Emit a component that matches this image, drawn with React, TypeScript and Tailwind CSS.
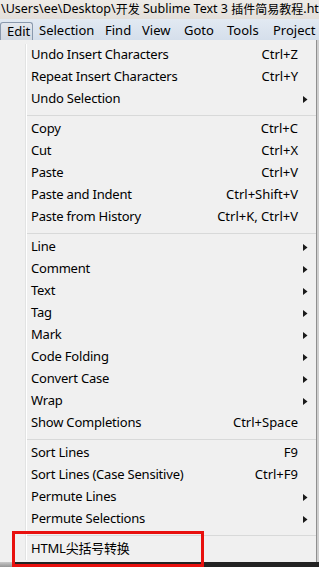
const FONT = "font-['Noto_Sans','Noto_Sans_CJK_SC',sans-serif]";

type Item = { label: string; shortcut?: string; sub?: boolean };

const groups: Item[][] = [
  [
    { label: "Undo Insert Characters", shortcut: "Ctrl+Z" },
    { label: "Repeat Insert Characters", shortcut: "Ctrl+Y" },
    { label: "Undo Selection", sub: true },
  ],
  [
    { label: "Copy", shortcut: "Ctrl+C" },
    { label: "Cut", shortcut: "Ctrl+X" },
    { label: "Paste", shortcut: "Ctrl+V" },
    { label: "Paste and Indent", shortcut: "Ctrl+Shift+V" },
    { label: "Paste from History", shortcut: "Ctrl+K, Ctrl+V" },
  ],
  [
    { label: "Line", sub: true },
    { label: "Comment", sub: true },
    { label: "Text", sub: true },
    { label: "Tag", sub: true },
    { label: "Mark", sub: true },
    { label: "Code Folding", sub: true },
    { label: "Convert Case", sub: true },
    { label: "Wrap", sub: true },
    { label: "Show Completions", shortcut: "Ctrl+Space" },
  ],
  [
    { label: "Sort Lines", shortcut: "F9" },
    { label: "Sort Lines (Case Sensitive)", shortcut: "Ctrl+F9" },
    { label: "Permute Lines", sub: true },
    { label: "Permute Selections", sub: true },
  ],
  [{ label: "HTML尖括号转换" }],
];

const menus = [
  { name: "Edit", w: "w-[33px]" },
  { name: "Selection", w: "w-[66px]" },
  { name: "Find", w: "w-[37px]" },
  { name: "View", w: "w-[42px]" },
  { name: "Goto", w: "w-[43px]" },
  { name: "Tools", w: "w-[46px]" },
  { name: "Project", w: "w-[52px]" },
];

function Arrow() {
  return (
    <svg width="5" height="7" viewBox="0 0 5 7" className="ml-[5px]">
      <path d="M0 0 L4.5 3.5 L0 7 Z" fill="#1a1a1a" />
    </svg>
  );
}

function Row({ item }: { item: Item }) {
  return (
    <div className="flex h-[22px] items-center pl-[4px] text-[13px] text-black">
      <span className="flex-1 whitespace-nowrap tracking-[-0.2px]">{item.label}</span>
      {item.shortcut && <span className="whitespace-nowrap">{item.shortcut}</span>}
      <span className="flex w-[18px] items-center">{item.sub && <Arrow />}</span>
    </div>
  );
}

export default function App() {
  return (
    <div className={`relative h-[567px] w-[319px] overflow-hidden bg-[#232323] ${FONT}`}>
      <div className="flex h-[19px] items-center overflow-hidden whitespace-nowrap bg-gradient-to-b from-[#eeebe7] to-[#e3dfda] pl-[1px] text-[12.5px] text-black">
        <span>\Users\ee\Desktop\</span>
        <span className="text-[12px]">开发</span>
        <span>&nbsp;Sublime Text 3&nbsp;</span>
        <span className="text-[12px]">插件简易教程</span>
        <span>.htm</span>
      </div>
      <div className="flex h-[21px] items-end bg-gradient-to-b from-[#e2e9f2] to-[#d5dfeb] text-[13px] text-black">
        {menus.map((m, i) => (
          <div
            key={m.name}
            className={`${m.w} flex h-[18px] items-center pl-[6px] ${
              i === 0 ? "rounded-t-[3px] border border-b-0 border-[#8a99ad] bg-gradient-to-b from-[#e4e8ee] to-[#d2d9e2] pl-[4px]" : ""
            }`}
          >
            {m.name}
          </div>
        ))}
      </div>
      <div className="flex">
        <div className="flex w-[317px] border-r border-[#8f8f8f] bg-[#f0f0f0] pb-[2px] pt-[4px]">
          <div className="w-[26px] border-r border-[#e2e3e3]" />
          <div className="flex-1 border-l border-white">
            {groups.map((g, gi) => (
              <div key={gi}>
                {gi > 0 && (
                  <div className="pb-[2px] pt-[5px]">
                    <div className="h-px bg-[#d8d9d9]" />
                  </div>
                )}
                {g.map((it) => (
                  <Row key={it.label} item={it} />
                ))}
              </div>
            ))}
          </div>
        </div>
        <div className="flex-1 bg-[#cfcfcf]" />
      </div>
      <div className="h-[6px] w-[12px] bg-gradient-to-b from-[#c9c9c9] to-[#8a8a8a]" />
      <div className="absolute left-[12px] top-[531px] h-[36px] w-[192px] border-[3px] border-[#e8100e]" />
    </div>
  );
}
